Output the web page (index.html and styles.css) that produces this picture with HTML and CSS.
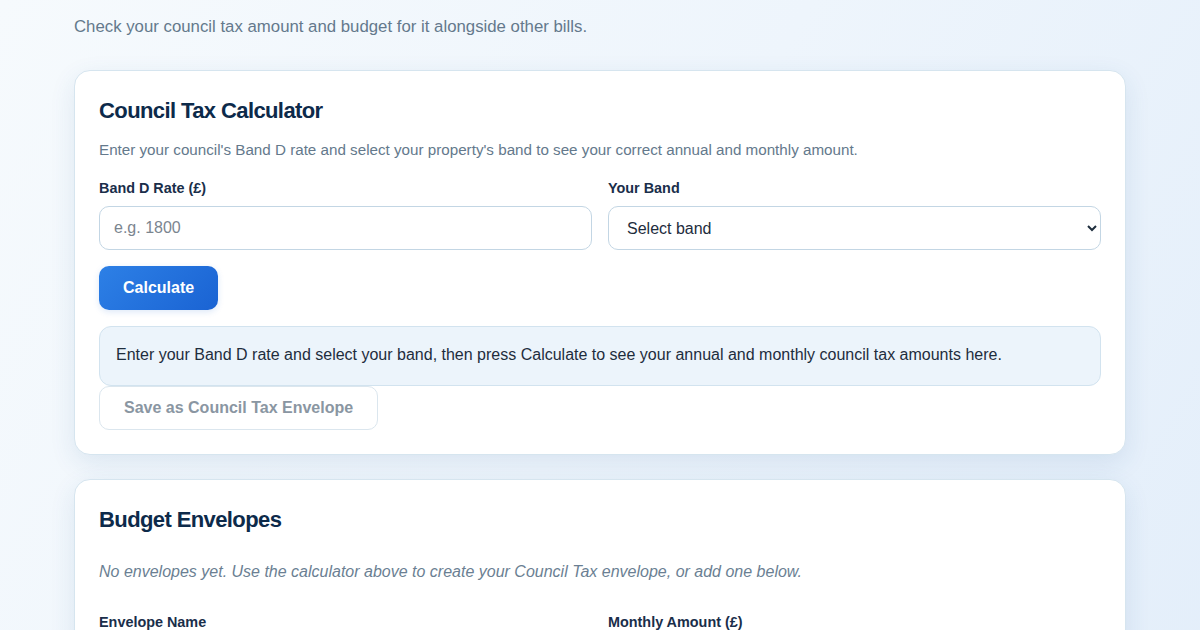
FILE: index.html
```html
<!DOCTYPE html>
<html lang="en">
<head>
<meta charset="utf-8">
<title>Council Tax Calculator</title>
<link rel="stylesheet" href="styles.css">
</head>
<body>
<main class="page">
  <p class="intro">Check your council tax amount and budget for it alongside other bills.</p>

  <section class="card">
    <h2 class="card-title">Council Tax Calculator</h2>
    <p class="card-desc">Enter your council's Band D rate and select your property's band to see your correct annual and monthly amount.</p>
    <div class="form-grid">
      <div class="field">
        <label class="label" for="rate">Band D Rate (£)</label>
        <input class="control" id="rate" type="text" placeholder="e.g. 1800">
      </div>
      <div class="field">
        <label class="label" for="band">Your Band</label>
        <select class="control select" id="band">
          <option>Select band</option>
        </select>
      </div>
    </div>
    <div class="actions">
      <button class="btn-primary" type="button">Calculate</button>
    </div>
    <div class="result">Enter your Band D rate and select your band, then press Calculate to see your annual and monthly council tax amounts here.</div>
    <div class="save-row">
      <button class="btn-secondary" type="button">Save as Council Tax Envelope</button>
    </div>
  </section>

  <section class="card">
    <h2 class="card-title">Budget Envelopes</h2>
    <p class="empty">No envelopes yet. Use the calculator above to create your Council Tax envelope, or add one below.</p>
    <div class="form-grid">
      <div class="field">
        <label class="label" for="ename">Envelope Name</label>
        <input class="control" id="ename" type="text" placeholder="e.g. Water">
      </div>
      <div class="field">
        <label class="label" for="eamt">Monthly Amount (£)</label>
        <input class="control" id="eamt" type="text" placeholder="e.g. 40">
      </div>
    </div>
  </section>
</main>
</body>
</html>
```

FILE: styles.css
```css
* { box-sizing: border-box; }

html, body {
  margin: 0;
  padding: 0;
}

body {
  font-family: "Liberation Sans", Arial, sans-serif;
  background: linear-gradient(120deg, #f6fafd 0%, #eef5fc 50%, #e3eefa 100%);
  min-height: 630px;
  color: #1e2d3d;
}

.page {
  width: 1052px;
  margin: 0 auto;
  padding-top: 16px;
}

.intro {
  margin: 0 0 32px 0;
  font-size: 16.8px;
  line-height: 22px;
  color: #64798c;
}

.card {
  background: #ffffff;
  border: 1px solid #d6e5ef;
  border-radius: 16px;
  padding: 25px 24px 24px 24px;
  margin-bottom: 24px;
  box-shadow: 0 8px 26px rgba(40, 90, 150, 0.11);
}

.card-title {
  margin: 0;
  font-size: 22px;
  line-height: 30px;
  font-weight: 700;
  color: #0d2a4a;
  letter-spacing: -0.6px;
}

.card-desc {
  margin: 13px 0 17px 0;
  font-size: 15.2px;
  line-height: 22px;
  color: #64798c;
}

.empty {
  margin: 25px 0 28px 0;
  font-size: 16px;
  line-height: 24px;
  font-style: italic;
  color: #6b7f93;
}

.form-grid {
  display: grid;
  grid-template-columns: 1fr 1fr;
  gap: 16px;
}

.field {
  display: flex;
  flex-direction: column;
}

.label {
  font-size: 14.4px;
  line-height: 20px;
  font-weight: 700;
  color: #1a2e4a;
  margin-bottom: 8px;
}

.control {
  height: 44px;
  border: 1px solid #c3d6e4;
  border-radius: 10px;
  background: #ffffff;
  font-family: "Liberation Sans", Arial, sans-serif;
  font-size: 16px;
  color: #1e2d3d;
  padding: 0 14px;
  width: 100%;
}

.control::placeholder {
  color: #7b858f;
}

.select {
  padding: 0 10px 0 14px;
  color: #1e2d3d;
}

.actions {
  margin-top: 16px;
  margin-bottom: 16px;
}

.btn-primary {
  height: 44px;
  padding: 0 24px;
  border: none;
  border-radius: 10px;
  background: linear-gradient(135deg, #2d80e6 0%, #1a63d3 100%);
  color: #ffffff;
  font-family: "Liberation Sans", Arial, sans-serif;
  font-size: 16px;
  font-weight: 700;
  box-shadow: 0 2px 6px rgba(30, 100, 210, 0.15);
}

.result {
  background: #ecf4fb;
  border: 1px solid #d2e3ef;
  border-radius: 12px;
  padding: 16px 16px;
  min-height: 60px;
  font-size: 16px;
  line-height: 24px;
  color: #1e2d3d;
}

.save-row {
  display: flex;
}

.btn-secondary {
  height: 44px;
  padding: 0 24px;
  background: #ffffff;
  border: 1px solid #dbe6ee;
  border-radius: 10px;
  color: #8a96a2;
  font-family: "Liberation Sans", Arial, sans-serif;
  font-size: 16px;
  font-weight: 700;
}
```
